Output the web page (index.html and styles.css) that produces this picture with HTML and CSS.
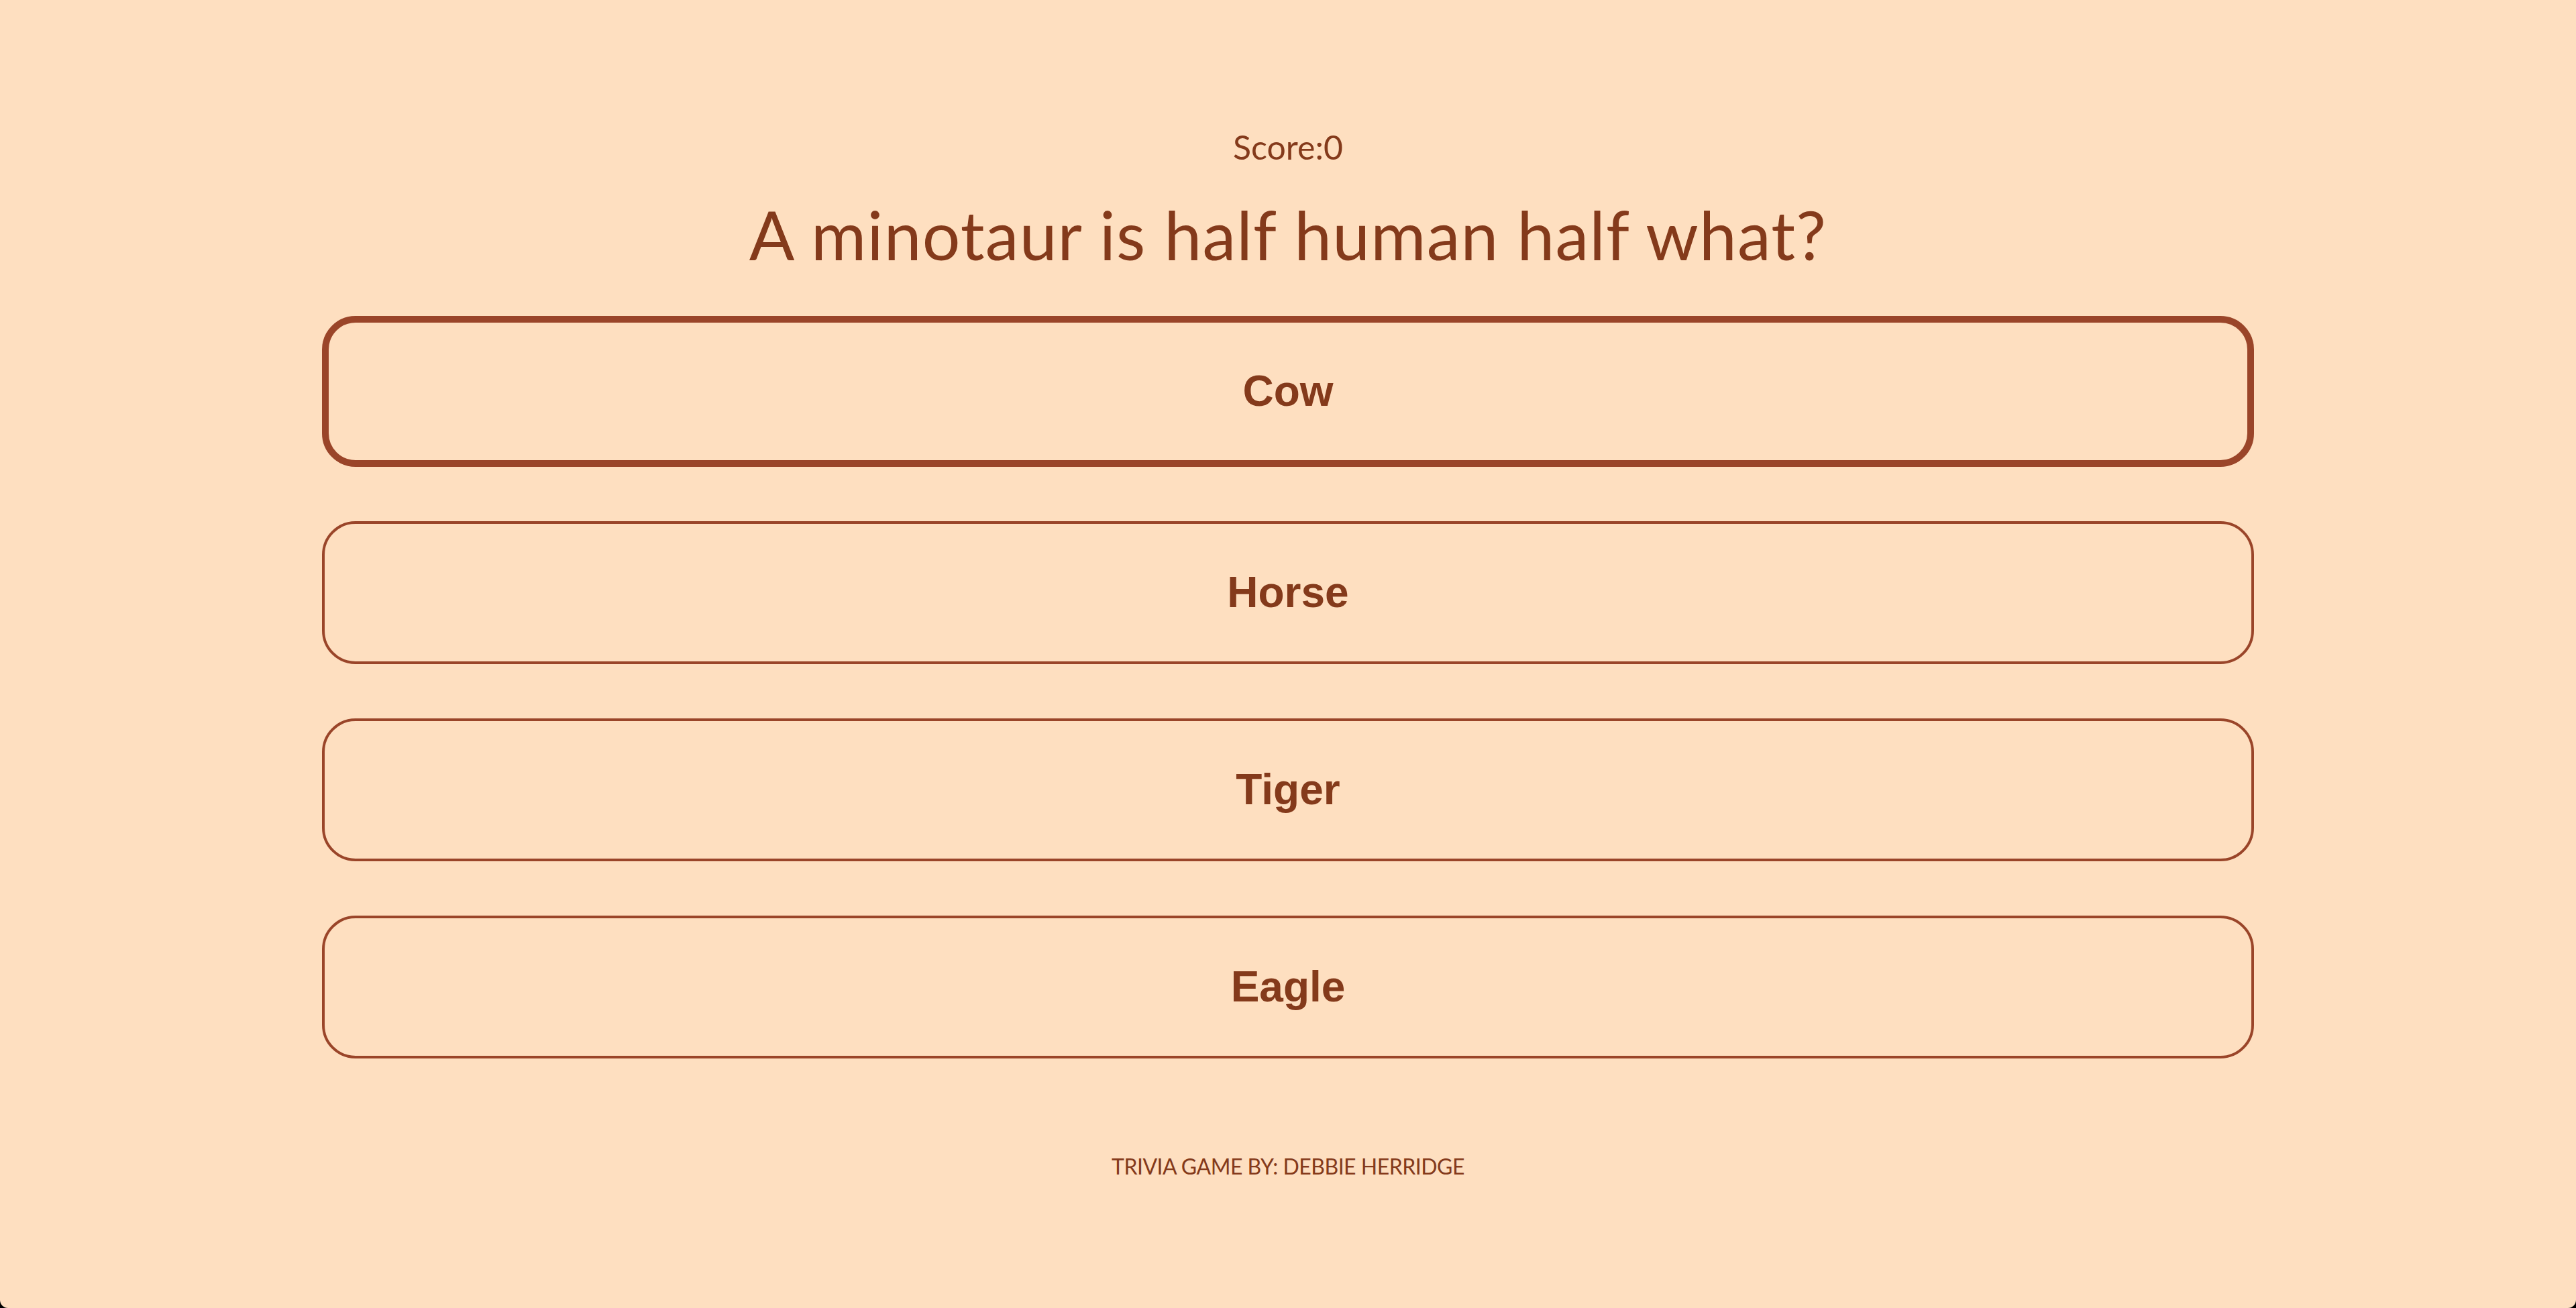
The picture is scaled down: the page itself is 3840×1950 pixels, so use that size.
FILE: index.html
```html
<!DOCTYPE html>
<html lang="en">
<head>
<meta charset="utf-8">
<title>Trivia Game</title>
<link rel="stylesheet" href="styles.css">
</head>
<body>
<div class="window">
  <main class="game">
    <p class="score">Score:0</p>
    <h1 class="question">A minotaur is half human half what?</h1>
    <div class="answers">
      <button class="answer answer--active">Cow</button>
      <button class="answer">Horse</button>
      <button class="answer">Tiger</button>
      <button class="answer">Eagle</button>
    </div>
    <footer class="credit">TRIVIA GAME BY: DEBBIE HERRIDGE</footer>
  </main>
</div>
</body>
</html>
```

FILE: styles.css
```css
html {
  background: #000;
}
body {
  margin: 0;
}
.window {
  height: 1950px;
  box-sizing: border-box;
  background: #fedfc0;
  border-bottom-left-radius: 12px;
  border-bottom-right-radius: 12px;
  color: #843a1b;
  font-family: Lato, "Noto Sans", sans-serif;
  overflow: hidden;
}
.game {
  display: flex;
  flex-direction: column;
  align-items: center;
  padding-top: 194px;
}
.score {
  margin: 0;
  font-size: 50px;
  line-height: 50px;
  font-weight: 400;
}
.question {
  margin: 55px 0 0;
  font-size: 100px;
  line-height: 100px;
  font-weight: 400;
  letter-spacing: 1.2px;
}
.answers {
  margin-top: 72px;
  width: 75%;
  display: flex;
  flex-direction: column;
  gap: 81px;
}
.answer {
  box-sizing: border-box;
  width: 100%;
  padding: 64px 0;
  border: 4px solid #9a4529;
  border-radius: 50px;
  background: transparent;
  color: #843a1b;
  font-family: "Liberation Sans", Arial, sans-serif;
  font-weight: 700;
  font-size: 64px;
  line-height: 77px;
  cursor: pointer;
}
.answer--active {
  border-width: 10px;
}
.credit {
  margin-top: 145px;
  font-size: 32px;
  line-height: 32px;
  letter-spacing: -0.5px;
}
```
